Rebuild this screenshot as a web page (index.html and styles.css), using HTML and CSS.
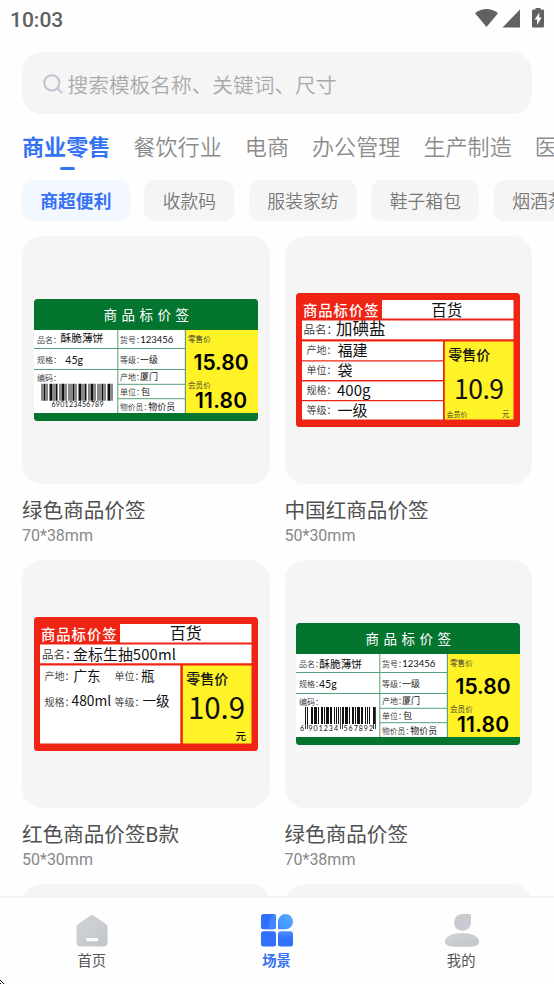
FILE: index.html
```html
<!DOCTYPE html>
<html lang="zh-CN">
<head>
<meta charset="utf-8">
<title>场景</title>
<link rel="stylesheet" href="styles.css">
</head>
<body>
<div class="app">
  <header class="status">
    <span class="time">10:03</span>
    <svg class="status-icons" width="72" height="24" viewBox="0 0 72 24">
      <path d="M1 5.200Q12.500-3.200 24 5.200L12.500 19Z"/>
      <path d="M46 1.500V19.500H28.500Z"/>
      <path fill-rule="evenodd" d="M61.500 0h5v1.500h2.300a1.200 1.200 0 0 1 1.200 1.200v15.600a1.200 1.200 0 0 1-1.200 1.200h-9.600a1.200 1.200 0 0 1-1.200-1.200V2.700a1.200 1.200 0 0 1 1.200-1.200h2.300ZM65.500 4.500L60.500 11.500h2.600v5.500L67.700 9.500h-2.600Z"/>
    </svg>
  </header>

  <div class="search">
    <svg width="20" height="20" viewBox="0 0 20 20"><circle cx="8.800" cy="8.800" r="7.600"/><path d="M14.500 14.500L18.500 18.500"/></svg>
    <span>搜索模板名称、关键词、尺寸</span>
  </div>

  <nav class="tabs">
    <span class="tab active">商业零售</span>
    <span class="tab">餐饮行业</span>
    <span class="tab">电商</span>
    <span class="tab">办公管理</span>
    <span class="tab">生产制造</span>
    <span class="tab">医疗健康</span>
  </nav>

  <div class="chips">
    <span class="chip active">商超便利</span>
    <span class="chip">收款码</span>
    <span class="chip">服装家纺</span>
    <span class="chip">鞋子箱包</span>
    <span class="chip">烟酒茶饮</span>
  </div>

  <main class="grid">
    <article class="card">
      <div class="thumb">
        <svg class="label" width="224" height="122" viewBox="0 0 224 122">
          <rect class="green" width="224" height="122" rx="3.500"/>
          <rect class="white" y="31" width="151" height="83"/>
          <rect class="yellow" x="151.500" y="31" width="72.500" height="83"/>
          <path class="rule-green" d="M0 49.500H151M0 70.500H151M84 85.300H151M84 99.700H151M83.800 31V114M151.300 31V114"/>
          <text class="w" x="69.500" y="20.700" font-size="13.500" letter-spacing="4.500">商品标价签</text>
          <text class="s" x="3" y="43.700" font-size="8">品名：</text>
          <text x="26.500" y="43.300" font-size="10.700">酥脆薄饼</text>
          <text class="s" x="3" y="63.500" font-size="8">规格：</text>
          <text class="d" x="31.300" y="64.500" font-size="10.500">45g</text>
          <text class="s" x="3" y="81.500" font-size="8">编码：</text>
          <path class="bars a" d="M7.500 93.300H79.500"/>
          <text class="d" x="17.500" y="108.300" font-size="7" textLength="52">690123456789</text>
          <text class="s" x="86" y="43.700" font-size="8">货号：</text>
          <text class="d" x="106.300" y="44" font-size="9.500" textLength="33">123456</text>
          <text class="s" x="86" y="63.500" font-size="8">等级：</text>
          <text x="106" y="63.500" font-size="9">一级</text>
          <text class="s" x="86" y="80.500" font-size="8">产地：</text>
          <text x="106" y="80.800" font-size="9">厦门</text>
          <text class="s" x="86" y="95.500" font-size="8">单位：</text>
          <text x="107" y="95.500" font-size="9">包</text>
          <text class="s" x="86" y="110.500" font-size="7.800">物价员：</text>
          <text x="114.300" y="110.700" font-size="9">物价员</text>
          <text class="s" x="154" y="43" font-size="7.600">零售价</text>
          <text class="price" x="159.500" y="70.500" font-size="21" textLength="55">15.80</text>
          <text class="s" x="154" y="88.500" font-size="7.600">会员价</text>
          <text class="price" x="161" y="109" font-size="21" textLength="52">11.80</text>
        </svg>
      </div>
      <h2>绿色商品价签</h2>
      <p>70*38mm</p>
    </article>

    <article class="card">
      <div class="thumb">
        <svg class="label" width="224" height="134" viewBox="0 0 224 134">
          <rect class="red" width="224" height="134" rx="3.500"/>
          <path class="white" d="M86 7H217.500V25.500H86ZM6 27.500H217.500V46.300H6ZM6 48.500H147V67.200H6ZM6 68.500H147V87H6ZM6 88.500H147V107H6ZM6 108.300H147V126.500H6Z"/>
          <rect class="yellow" x="148.800" y="48.500" width="68.700" height="78"/>
          <text class="w m" x="7" y="22.500" font-size="14.300" letter-spacing="1">商品标价签</text>
          <text x="135.300" y="22.500" font-size="15.500">百货</text>
          <text class="s" x="7.500" y="40.700" font-size="11.500">品名：</text>
          <text x="40" y="41.500" font-size="16.500">加碘盐</text>
          <text class="s" x="10.500" y="60.500" font-size="10">产地：</text>
          <text x="41.500" y="62.500" font-size="15">福建</text>
          <text class="s" x="10.500" y="80.500" font-size="10">单位：</text>
          <text x="41.500" y="82.500" font-size="15">袋</text>
          <text class="s" x="10.500" y="101" font-size="10">规格：</text>
          <text x="41" y="102.800" font-size="15">400g</text>
          <text class="s" x="10.500" y="121.300" font-size="10">等级：</text>
          <text x="41.500" y="122.800" font-size="15">一级</text>
          <text class="m" x="152.300" y="66.500" font-size="14">零售价</text>
          <text x="158" y="105.700" font-size="26.500" textLength="50">10.9</text>
          <text class="s" x="150.500" y="124.300" font-size="7">会员价</text>
          <text class="s" x="206" y="124.300" font-size="7.500">元</text>
        </svg>
      </div>
      <h2>中国红商品价签</h2>
      <p>50*30mm</p>
    </article>

    <article class="card">
      <div class="thumb">
        <svg class="label" width="224" height="134" viewBox="0 0 224 134">
          <rect class="red" width="224" height="134" rx="3.500"/>
          <path class="white" d="M86 7H217.500V25.500H86ZM6 27.500H217.500V46.300H6ZM6 48.500H146.300V126.500H6Z"/>
          <rect class="yellow" x="148.800" y="48.500" width="68.700" height="78"/>
          <text class="w m" x="7" y="22.500" font-size="14.300" letter-spacing="1">商品标价签</text>
          <text x="135.700" y="22" font-size="16">百货</text>
          <text class="s" x="8" y="41.500" font-size="11.500">品名：</text>
          <text x="39" y="42.700" font-size="14.800" textLength="103">金标生抽500ml</text>
          <text class="s" x="10.500" y="63.300" font-size="10">产地：</text>
          <text x="39.500" y="63.800" font-size="13.500">广东</text>
          <text class="s" x="80.500" y="63.300" font-size="10">单位：</text>
          <text x="107" y="64" font-size="13.500">瓶</text>
          <text class="s" x="10.500" y="88.500" font-size="10">规格：</text>
          <text x="37.500" y="89.300" font-size="13.800">480ml</text>
          <text class="s" x="80.500" y="88.500" font-size="10">等级：</text>
          <text x="108.500" y="89" font-size="13.500">一级</text>
          <text class="m" x="152.300" y="66.500" font-size="14">零售价</text>
          <text x="154" y="101.500" font-size="29.500" textLength="57">10.9</text>
          <text class="m" x="201.500" y="122.500" font-size="10.500">元</text>
        </svg>
      </div>
      <h2>红色商品价签B款</h2>
      <p>50*30mm</p>
    </article>

    <article class="card">
      <div class="thumb">
        <svg class="label" width="224" height="122" viewBox="0 0 224 122">
          <rect class="green" width="224" height="122" rx="3.500"/>
          <rect class="white" y="31" width="151" height="83"/>
          <rect class="yellow" x="151.500" y="31" width="72.500" height="83"/>
          <path class="rule-green" d="M0 49.500H151M0 70.500H151M84 85.300H151M84 99.700H151M83.800 31V114M151.300 31V114"/>
          <text class="w" x="69.500" y="20.700" font-size="13.500" letter-spacing="4.500">商品标价签</text>
          <text class="s" x="3" y="43.700" font-size="8">品名：</text>
          <text x="23.300" y="45" font-size="10.700">酥脆薄饼</text>
          <text class="s" x="3" y="63.500" font-size="8">规格：</text>
          <text class="d" x="23" y="64.700" font-size="10.500">45g</text>
          <text class="s" x="3" y="81.500" font-size="8">编码：</text>
          <path class="bars b" d="M9 92.500H80"/>
          <path class="guards" d="M9.500 84V106M11.500 84V106M44.500 84V106M46.500 84V106M77.500 84V106M79.500 84V106"/>
          <text class="d" x="4" y="107.500" font-size="7">6</text>
          <text class="d" x="12.500" y="107.500" font-size="7" textLength="29.500">901234</text>
          <text class="d" x="47.500" y="107.500" font-size="7" textLength="29.500">567892</text>
          <text class="s" x="86" y="43.700" font-size="8">货号：</text>
          <text class="d" x="106.300" y="44" font-size="9.500" textLength="33">123456</text>
          <text class="s" x="86" y="63.500" font-size="8">等级：</text>
          <text x="106" y="63.500" font-size="9">一级</text>
          <text class="s" x="86" y="80.500" font-size="8">产地：</text>
          <text x="106" y="80.800" font-size="9">厦门</text>
          <text class="s" x="86" y="95.500" font-size="8">单位：</text>
          <text x="107" y="95.500" font-size="9">包</text>
          <text class="s" x="86" y="110.500" font-size="7.800">物价员：</text>
          <text x="114.300" y="110.700" font-size="9">物价员</text>
          <text class="s" x="154" y="43" font-size="7.600">零售价</text>
          <text class="price" x="159.500" y="70.500" font-size="21" textLength="55">15.80</text>
          <text class="s" x="154" y="88.500" font-size="7.600">会员价</text>
          <text class="price" x="161" y="109" font-size="21" textLength="52">11.80</text>
        </svg>
      </div>
      <h2>绿色商品价签</h2>
      <p>70*38mm</p>
    </article>

    <article class="card"><div class="thumb"></div></article>
    <article class="card"><div class="thumb"></div></article>
  </main>

  <footer class="bottom-nav">
    <div class="nav-item">
      <svg width="36" height="34" viewBox="0 0 36 34">
        <defs><linearGradient id="gray" x1="0" y1="0" x2="1" y2="1"><stop offset="0" stop-color="#d2d4d8"/><stop offset="1" stop-color="#c1c4c9"/></linearGradient></defs>
        <path fill="url(#gray)" d="M16 1.800Q18 .4 20 1.800L31.800 10Q33.500 11.300 33.500 13.500V28.500Q33.500 32.500 29.500 32.500H6.500Q2.500 32.500 2.500 28.500V13.500Q2.500 11.300 4.200 10Z"/>
        <rect x="12.500" y="24" width="11.500" height="3.200" rx=".8" fill="#fff"/>
      </svg>
      <span>首页</span>
    </div>
    <div class="nav-item active">
      <svg width="36" height="34" viewBox="0 0 36 34">
        <defs>
          <linearGradient id="drop" x1="1" y1="0" x2="0" y2="1"><stop offset="0" stop-color="#5aaeff"/><stop offset="1" stop-color="#3d8dff"/></linearGradient>
          <linearGradient id="tile" x1="0" y1="0" x2="0" y2="1"><stop offset="0" stop-color="#4b8dff"/><stop offset=".5" stop-color="#3370fb"/></linearGradient>
        </defs>
        <rect x="2" y="0" width="15" height="15.300" rx="2.500" fill="#3170fa"/>
        <path d="M17 2.500V12.800Q17 15.300 14.500 15.300H9.500Q9.500 6 14.500 0Q17 0 17 2.500Z" fill="#4286ff"/>
        <path d="M19 15.300V7.600a7.500 7.600 0 1 1 7.500 7.700Z" fill="url(#drop)"/>
        <rect x="2" y="17.300" width="15" height="15.200" rx="2.500" fill="#3170fa"/>
        <rect x="19" y="17.300" width="15" height="15.200" rx="2.500" fill="url(#tile)"/>
      </svg>
      <span>场景</span>
    </div>
    <div class="nav-item">
      <svg width="36" height="34" viewBox="0 0 36 34">
        <path fill="#c8cbd0" d="M18.500 0H25.500Q27 0 27 1.500V8.500A8.500 8.500 0 1 1 18.500 0Z"/>
        <path fill="url(#gray)" d="M1 27.500C1 22 9 19 18 19s17 3 17 8.500C35 32 30 32.700 25 32.700H11C6 32.700 1 32 1 27.500Z"/>
      </svg>
      <span>我的</span>
    </div>
  </footer>
  <svg class="pointer" width="4" height="4" viewBox="0 0 4 4"><path d="M0 0h1v1H0ZM1 1h1v1H1ZM2 2h1v1H2ZM3 3h1v1H3ZM0 3h1v1H0Z"/></svg>
</div>
</body>
</html>
```
FILE: styles.css
```css
* { box-sizing: border-box; }

body {
  margin: 0;
  background: #fff;
  font-family: Roboto, "Noto Sans CJK SC", sans-serif;
}

.app {
  position: relative;
  display: flex;
  flex-direction: column;
  width: 554px;
  height: 984px;
  overflow: hidden;
  background: #fefefe;
}

.status {
  flex: none;
  display: flex;
  justify-content: space-between;
  height: 52px;
  padding: 8px 8px 0 10px;
}

.time {
  font-size: 21px;
  font-weight: 500;
  line-height: 24px;
  color: #606060;
}

.status-icons { fill: #616161; }

.search {
  flex: none;
  display: flex;
  align-items: center;
  gap: 5px;
  height: 62px;
  margin: 0 22px;
  padding: 1px 20px 0 20.5px;
  border-radius: 20px;
  background: #f5f5f5;
  color: #a9a9a9;
  font-size: 20.7px;
  font-weight: 350;
}

.search span { padding-top: 1px; }
.search svg { fill: none; stroke: #c2c2d2; stroke-width: 2; stroke-linecap: round; }

.tabs {
  flex: none;
  display: flex;
  gap: 23px;
  height: 66px;
  padding: 16px 0 0 22px;
  white-space: nowrap;
  font-size: 22.1px;
  font-weight: 350;
  line-height: 34px;
  color: #8c8c8c;
}

.tab { flex: none; }
.tab.active { color: #3572f5; font-weight: 700; }

.tab.active::after {
  content: "";
  display: block;
  width: 15px;
  height: 3px;
  margin: 3px auto 0;
  border-radius: 2px;
  background: #3572f5;
  transform: translateX(1px);
}

.chips {
  flex: none;
  display: flex;
  gap: 14.7px;
  padding-left: 22px;
  white-space: nowrap;
}

.chip {
  flex: none;
  height: 41px;
  padding: 0 18.3px;
  border-radius: 11px;
  background: #f5f5f5;
  color: #777;
  font-size: 17.8px;
  font-weight: 350;
  line-height: 44px;
}

.chip.active { background: #f3f7ff; color: #3572f5; font-weight: 700; }

.grid {
  flex: 1;
  min-height: 0;
  overflow: hidden;
  display: grid;
  grid-template-columns: 1fr 1fr;
  grid-auto-rows: 309px;
  gap: 15px;
  padding: 15px 22px 0;
}

.thumb {
  display: flex;
  align-items: center;
  justify-content: center;
  height: 247.500px;
  border-radius: 20px;
  background: #f5f5f5;
}

.card h2 {
  margin: 12px 0 0;
  font-size: 20.6px;
  font-weight: 400;
  line-height: 30px;
  color: #505050;
}

.card p {
  margin: 0;
  font-size: 16px;
  line-height: 19px;
  color: #888;
}

.label { font-family: "Noto Sans CJK SC", sans-serif; fill: #111; }
.label .green { fill: #04752f; }
.label .red { fill: #ef2415; }
.label .white { fill: #fff; }
.label .yellow { fill: #fff227; }
.label .w { fill: #fff; }
.label .m { font-weight: 500; }
.label .s { fill: #333; font-weight: 350; }
.label .d { font-family: Lato, "Noto Sans CJK SC", sans-serif; }
.label .price { font-family: Inter, sans-serif; font-weight: 600; fill: #000; }
.rule-green { fill: none; stroke: #55a078; stroke-width: 1; }
.bars { fill: none; stroke: #111; stroke-width: 17; }
.bars.a { stroke-dasharray: 1 1 2 1 1 2 3 1 1 1 2 2 1 1 3 1 1 2 1 1; }
.bars.b { stroke-dasharray: 1 1 1 3 2 1 3 1 1 2 2 1 1 1 3 1 2 2 1 1; }
.guards { stroke: #111; stroke-width: 0.8; }

.bottom-nav {
  flex: none;
  display: grid;
  grid-template-columns: repeat(3, 1fr);
  height: 88px;
  padding-top: 16px;
  border-top: 2px solid #f5f5f5;
  background: #fefefe;
}

.nav-item {
  display: flex;
  flex-direction: column;
  align-items: center;
  gap: 3px;
  color: #555;
  font-size: 14.3px;
  line-height: 21px;
}

.nav-item span { padding-right: 1px; }
.nav-item.active { color: #3572f5; font-weight: 700; }

.pointer { position: absolute; left: 0; bottom: 0; fill: #000; }
```
